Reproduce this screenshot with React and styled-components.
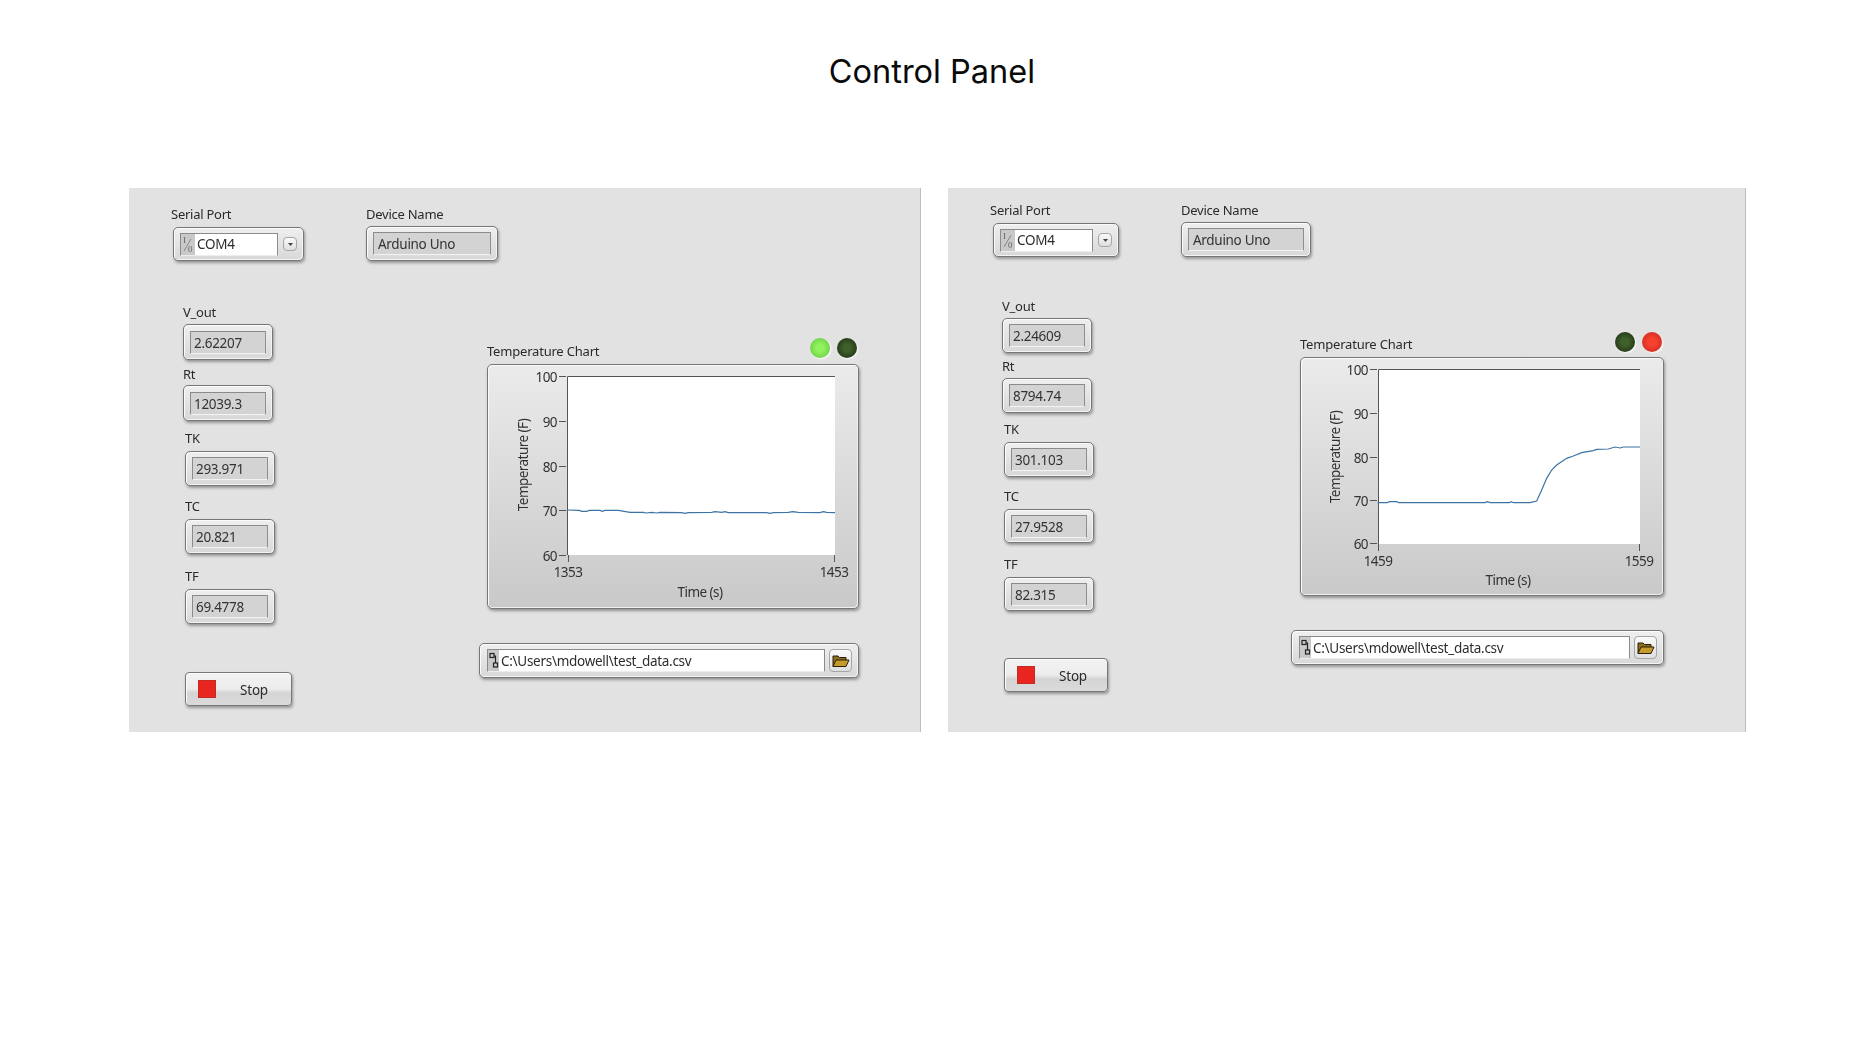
import React from 'react';
import styled, { createGlobalStyle } from 'styled-components';

const GlobalStyle = createGlobalStyle`
  html, body {
    margin: 0;
    background: #fff;
  }
  body {
    font-family: "Noto Sans", "Open Sans", sans-serif;
    color: #2b2b2b;
  }
`;

// series points were read off the screenshot, plot px from the ring corner
const LEFT_LINE = [[290,570],[328,571],[335,574],[350,574],[358,571],[390,571],[397,574],[405,571],[445,571],[480,577],[520,577],[528,579],[545,577],[560,579],[570,577],[635,578],[645,580],[655,578],[725,577],[735,575],[755,577],[765,575],[775,578],[890,578],[900,580],[910,578],[955,577],[968,575],[985,577],[1050,578],[1060,575],[1070,577],[1095,578]]
  .map(([x, y]) => [x / 3 - 17, y / 3 - 44]);
const RIGHT_LINE = [[293,548],[322,548],[328,545],[350,545],[356,548],[615,548],[622,545],[630,548],[688,548],[694,545],[700,548],[750,548],[770,543],[785,510],[800,475],[815,450],[830,435],[860,415],[880,408],[905,398],[940,392],[950,388],[985,387],[1005,381],[1020,384],[1030,381],[1080,381]]
  .map(([x, y]) => [x / 3 - 20, y / 3 - 37]);

const LED_ON_GREEN = { key: 'green', core: '#93f25f', rim: '#5fc63c' };
const LED_OFF_GREEN = { key: 'dark', core: '#3f5f2b', rim: '#1b2c11' };
const LED_ON_RED = { key: 'red', core: '#f6432f', rim: '#c9271d' };

const PANELS = [
  {
    width: 792,
    padTop: 19,
    serial: { blockWidth: 195, ringLeft: 2, ringWidth: 131, ringHeight: 34, labelGap: 4 },
    device: { ringWidth: 132, ringHeight: 35, labelGap: 3 },
    fieldsTop: 44,
    fieldsWidth: 296,
    fields: [
      { label: 'V_out', value: '2.62207', top: 0, gap: 3, indent: 0, height: 36 },
      { label: 'Rt', value: '12039.3', top: 7, gap: 2, indent: 0, height: 36 },
      { label: 'TK', value: '293.971', top: 10, gap: 4, indent: 2, height: 35 },
      { label: 'TC', value: '20.821', top: 13, gap: 4, indent: 2, height: 35 },
      { label: 'TF', value: '69.4778', top: 15, gap: 4, indent: 2, height: 35 },
    ],
    stop: { top: 48, width: 107, height: 34 },
    chart: {
      top: 33,
      colWidth: 380,
      left: 8,
      headHeight: 21,
      ringGap: 5,
      width: 372,
      height: 245,
      plot: { x: 80, y: 12, w: 268, h: 179 },
      ticks: [12, 57, 102, 146, 191],
      xLabels: ['1353', '1453'],
      xTicks: [81, 347],
      xLabelY: 213,
      timeX: 213,
      timeY: 233,
      tempX: 41,
      tempY: 101,
      line: LEFT_LINE,
      leds: [LED_ON_GREEN, LED_OFF_GREEN],
    },
    path: { top: 34, width: 380, height: 35 },
  },
  {
    width: 798,
    padTop: 15,
    serial: { blockWidth: 191, ringLeft: 3, ringWidth: 126, ringHeight: 34, labelGap: 4 },
    device: { ringWidth: 130, ringHeight: 35, labelGap: 3 },
    fieldsTop: 42,
    fieldsWidth: 289,
    fields: [
      { label: 'V_out', value: '2.24609', top: 0, gap: 3, indent: 0, height: 35 },
      { label: 'Rt', value: '8794.74', top: 6, gap: 3, indent: 0, height: 35 },
      { label: 'TK', value: '301.103', top: 9, gap: 4, indent: 2, height: 35 },
      { label: 'TC', value: '27.9528', top: 12, gap: 4, indent: 2, height: 34 },
      { label: 'TF', value: '82.315', top: 14, gap: 4, indent: 2, height: 34 },
    ],
    stop: { top: 47, width: 104, height: 34 },
    chart: {
      top: 33,
      colWidth: 373,
      left: 9,
      headHeight: 20,
      ringGap: 5,
      width: 364,
      height: 239,
      plot: { x: 78, y: 12, w: 262, h: 175 },
      ticks: [12, 56, 100, 143, 186],
      xLabels: ['1459', '1559'],
      xTicks: [78, 339],
      xLabelY: 209,
      timeX: 208,
      timeY: 228,
      tempX: 40,
      tempY: 100,
      line: RIGHT_LINE,
      leds: [LED_OFF_GREEN, LED_ON_RED],
    },
    path: { top: 34, width: 373, height: 35 },
  },
];

const Page = styled.div`
  width: 1874px;
  height: 1040px;
  overflow: hidden;
  background: #fff;
`;

const Title = styled.h1`
  margin: 0;
  height: 188px;
  padding: 51px 10px 0 0;
  box-sizing: border-box;
  text-align: center;
  font-family: Inter, sans-serif;
  font-size: 32.5px;
  line-height: 42px;
  font-weight: 400;
  letter-spacing: 0;
  color: #0a0a0a;
`;

const PanelRow = styled.div`
  display: flex;
  gap: 27px;
  padding-left: 129px;
`;

const Panel = styled.section`
  box-sizing: border-box;
  width: ${(p) => p.$width}px;
  height: 544px;
  padding: ${(p) => p.$padTop}px 0 0 42px;
  background: #e2e2e2;
  border-right: 1px solid #bdbdbd;
  filter: blur(0.4px);
`;

const TopRow = styled.div`
  display: flex;
  align-items: flex-start;
  margin-bottom: ${(p) => p.$shrink}px;
`;

const Block = styled.div`
  width: ${(p) => (p.$width ? `${p.$width}px` : 'auto')};
  flex-shrink: 0;
`;

const Label = styled.div`
  height: 16px;
  line-height: 15px;
  font-size: 13px;
  letter-spacing: -0.25px;
  white-space: nowrap;
  color: #2a2a2a;
  margin-bottom: ${(p) => p.$gap}px;
`;

const Ring = styled.div`
  box-sizing: border-box;
  display: flex;
  align-items: center;
  width: ${(p) => p.$width}px;
  height: ${(p) => p.$height}px;
  margin-left: ${(p) => p.$left || 0}px;
  padding: 0 6px;
  border: 1px solid #777;
  border-radius: 5px;
  background: linear-gradient(#efefef, #d8d8d8);
  box-shadow: inset 1px 1px 0 #fbfbfb, inset -1px -1px 0 #f4f4f4,
    1px 2px 3px rgba(0, 0, 0, 0.34);
`;

const Readout = styled.div`
  box-sizing: border-box;
  flex: 1;
  height: 23px;
  padding-left: ${(p) => p.$pad}px;
  line-height: 22px;
  font-size: 13.5px;
  letter-spacing: -0.3px;
  color: #333;
  background: #d3d3d3;
  border: 1px solid #8b8b8b;
  border-right-color: #8f8f8f;
  border-bottom-color: #f3f3f3;
`;

const TextBox = styled.div`
  flex: 1;
  min-width: 0;
  display: flex;
  height: 23px;
  background: #fff;
  border: 1px solid #8b8b8b;
  border-bottom-color: #ededed;
  box-sizing: border-box;
`;

const BoxIcon = styled.span`
  flex-shrink: 0;
  display: flex;
  align-items: center;
  justify-content: center;
  width: ${(p) => p.$width}px;
  background: #c9c9c9;
`;

const BoxText = styled.span`
  padding-left: 2px;
  line-height: ${(p) => p.$lineHeight}px;
  font-size: 13.5px;
  letter-spacing: -0.28px;
  color: #2c2c2c;
  white-space: nowrap;
`;

const SmallButton = styled.span`
  flex-shrink: 0;
  display: flex;
  align-items: center;
  justify-content: center;
  box-sizing: border-box;
  width: ${(p) => p.$size}px;
  height: ${(p) => p.$size}px;
  margin-left: ${(p) => p.$gap}px;
  border: 1px solid #a5a5a5;
  border-radius: 4px;
  background: linear-gradient(#fafafa, #dedede);
`;

const Body = styled.div`
  display: flex;
  align-items: flex-start;
  margin-top: ${(p) => p.$top}px;
`;

const FieldColumn = styled.div`
  flex-shrink: 0;
  box-sizing: border-box;
  width: ${(p) => p.$width}px;
  margin-left: 12px;
`;

const Field = styled.div`
  margin-top: ${(p) => p.$top}px;
  margin-left: ${(p) => p.$indent}px;
`;

const StopButton = styled.button`
  display: flex;
  align-items: center;
  box-sizing: border-box;
  width: ${(p) => p.$width}px;
  height: ${(p) => p.$height}px;
  margin: ${(p) => p.$top}px 0 0 2px;
  padding: 0 0 0 12px;
  font-family: inherit;
  font-size: 13.5px;
  letter-spacing: -0.2px;
  color: #2c2c2c;
  border: 1px solid #777;
  border-radius: 4px;
  background: linear-gradient(#f3f3f3 0%, #ececec 50%, #d4d4d4 62%, #dadada 100%);
  box-shadow: inset 1px 1px 0 #fbfbfb, 1px 2px 3px rgba(0, 0, 0, 0.34);
`;

const StopSquare = styled.span`
  width: 18px;
  height: 18px;
  margin-right: 24px;
  background: #e8261f;
  box-shadow: inset 0 0 0 1px #c22c24;
`;

const StopText = styled.span`
  padding-top: 2px;
`;

const ChartColumn = styled.div`
  flex-shrink: 0;
  width: ${(p) => p.$width}px;
  margin-top: ${(p) => p.$top}px;
`;

const ChartHead = styled.div`
  display: flex;
  justify-content: space-between;
  align-items: flex-start;
  height: ${(p) => p.$height}px;
  margin: 0 2px ${(p) => p.$gap}px ${(p) => p.$left}px;
`;

const ChartTitle = styled.div`
  align-self: flex-end;
  height: 16px;
  line-height: 16px;
  font-size: 13px;
  letter-spacing: -0.2px;
  color: #2a2a2a;
`;

const Leds = styled.div`
  display: flex;
  gap: 7px;
`;

const Led = styled.span`
  width: 20px;
  height: 20px;
  border-radius: 50%;
  background: radial-gradient(circle at 50% 50%, ${(p) => p.$core} 25%, ${(p) => p.$rim} 95%);
  box-shadow: 1px 1px 2px #fdfdfd;
`;

const ChartRing = styled.div`
  box-sizing: border-box;
  width: ${(p) => p.$width}px;
  height: ${(p) => p.$height}px;
  margin-left: ${(p) => p.$left}px;
  border: 1px solid #777;
  border-radius: 5px;
  background: linear-gradient(#ebebeb, #c9c9c9);
  box-shadow: inset 1px 1px 0 #fafafa, inset -1px -1px 0 #f0f0f0,
    1px 2px 3px rgba(0, 0, 0, 0.35);
`;

const ChartSvg = styled.svg`
  display: block;
  margin: -1px;
  font-family: "Noto Sans", sans-serif;
  font-size: 13.5px;
  letter-spacing: -0.55px;
  fill: #333;
`;

const PathRing = styled(Ring)`
  margin-top: ${(p) => p.$top}px;
  padding: 0 6px 0 7px;
`;

const SerialIcon = () => (
  <svg width="12" height="21" viewBox="0 0 12 21">
    <text x="1" y="9" fontFamily="Liberation Serif, serif" fontSize="9" fill="#666">I</text>
    <line x1="2" y1="17" x2="9" y2="5" stroke="#777" strokeWidth="0.8" />
    <text x="6" y="18" fontFamily="Liberation Serif, serif" fontSize="9" fill="#666">0</text>
  </svg>
);

const PathIcon = () => (
  <svg width="10" height="17" viewBox="0 0 10 17" fill="none" stroke="#222" strokeWidth="1.2">
    <rect x="1" y="1.5" width="4" height="4" />
    <path d="M5 4 H6.5 V11" />
    <rect x="4.5" y="11" width="4" height="4" />
  </svg>
);

const DropArrow = () => (
  <svg width="7" height="5" viewBox="0 0 7 5">
    <path d="M1 1 H6 L3.5 4 Z" fill="#444" />
  </svg>
);

const FolderIcon = () => (
  <svg width="18" height="14" viewBox="0 0 18 14">
    <path d="M1 12.5 V2 H6 L7.5 3.5 H14 V6" fill="#8a6d1e" stroke="#2a2008" strokeWidth="1" />
    <path d="M1 12.5 L4 6 H17 L14 12.5 Z" fill="#c49a2c" stroke="#2a2008" strokeWidth="1" />
  </svg>
);

const TemperatureChart = ({ chart }) => {
  const { plot, ticks, xTicks, xLabels, line, width, height } = chart;
  const values = [100, 90, 80, 70, 60];
  return (
    <ChartSvg width={width} height={height} viewBox={`0 0 ${width} ${height}`}>
      <rect x={plot.x} y={plot.y} width={plot.w} height={plot.h} fill="#fff" />
      <path
        d={`M${plot.x + 0.5} ${plot.y + plot.h} V${plot.y + 0.5} H${plot.x + plot.w}`}
        fill="none"
        stroke="#555"
      />
      {ticks.map((y, i) => (
        <g key={y}>
          <line x1={plot.x - 8} x2={plot.x - 1} y1={y + 0.5} y2={y + 0.5} stroke="#555" />
          <text x={plot.x - 10} y={y + 6} textAnchor="end">{values[i]}</text>
        </g>
      ))}
      {xTicks.map((x, i) => (
        <g key={x}>
          <line x1={x + 0.5} x2={x + 0.5} y1={plot.y + plot.h} y2={plot.y + plot.h + 7} stroke="#555" />
          <text x={x} y={chart.xLabelY} textAnchor="middle">{xLabels[i]}</text>
        </g>
      ))}
      <text x={chart.timeX} y={chart.timeY} textAnchor="middle">Time (s)</text>
      <text
        transform={`translate(${chart.tempX} ${chart.tempY}) rotate(-90)`}
        textAnchor="middle"
      >
        Temperature (F)
      </text>
      <polyline
        points={line.map((pt) => pt.join(',')).join(' ')}
        fill="none"
        stroke="#3c74a6"
        strokeWidth="1.2"
      />
    </ChartSvg>
  );
};

const ControlPanel = ({ panel }) => {
  const { serial, device, chart, path, stop } = panel;
  return (
    <Panel $width={panel.width} $padTop={panel.padTop}>
      <TopRow $shrink={0}>
        <Block $width={serial.blockWidth}>
          <Label $gap={serial.labelGap}>Serial Port</Label>
          <Ring $width={serial.ringWidth} $height={serial.ringHeight} $left={serial.ringLeft}>
            <TextBox>
              <BoxIcon $width={14}><SerialIcon /></BoxIcon>
              <BoxText $lineHeight={21}>COM4</BoxText>
            </TextBox>
            <SmallButton $size={14} $gap={5}><DropArrow /></SmallButton>
          </Ring>
        </Block>
        <Block>
          <Label $gap={device.labelGap}>Device Name</Label>
          <Ring $width={device.ringWidth} $height={device.ringHeight}>
            <Readout $pad={4}>Arduino Uno</Readout>
          </Ring>
        </Block>
      </TopRow>
      <Body $top={panel.fieldsTop}>
        <FieldColumn $width={panel.fieldsWidth}>
          {panel.fields.map((f) => (
            <Field key={f.label} $top={f.top} $indent={f.indent}>
              <Label $gap={f.gap}>{f.label}</Label>
              <Ring $width={90} $height={f.height}>
                <Readout $pad={3}>{f.value}</Readout>
              </Ring>
            </Field>
          ))}
          <StopButton $top={stop.top} $width={stop.width} $height={stop.height}>
            <StopSquare />
            <StopText>Stop</StopText>
          </StopButton>
        </FieldColumn>
        <ChartColumn $width={chart.colWidth} $top={chart.top}>
          <ChartHead $height={chart.headHeight} $gap={chart.ringGap} $left={chart.left}>
            <ChartTitle>Temperature Chart</ChartTitle>
            <Leds>
              {chart.leds.map((led) => <Led key={led.key} $core={led.core} $rim={led.rim} />)}
            </Leds>
          </ChartHead>
          <ChartRing $width={chart.width} $height={chart.height} $left={chart.left}>
            <TemperatureChart chart={chart} />
          </ChartRing>
          <PathRing $width={path.width} $height={path.height} $top={path.top}>
            <TextBox>
              <BoxIcon $width={11}><PathIcon /></BoxIcon>
              <BoxText $lineHeight={23}>C:\Users\mdowell\test_data.csv</BoxText>
            </TextBox>
            <SmallButton $size={23} $gap={4}><FolderIcon /></SmallButton>
          </PathRing>
        </ChartColumn>
      </Body>
    </Panel>
  );
};

const App = () => (
  <Page>
    <GlobalStyle />
    <Title>Control Panel</Title>
    <PanelRow>
      {PANELS.map((panel) => (
        <ControlPanel key={panel.width} panel={panel} />
      ))}
    </PanelRow>
  </Page>
);

export default App;
